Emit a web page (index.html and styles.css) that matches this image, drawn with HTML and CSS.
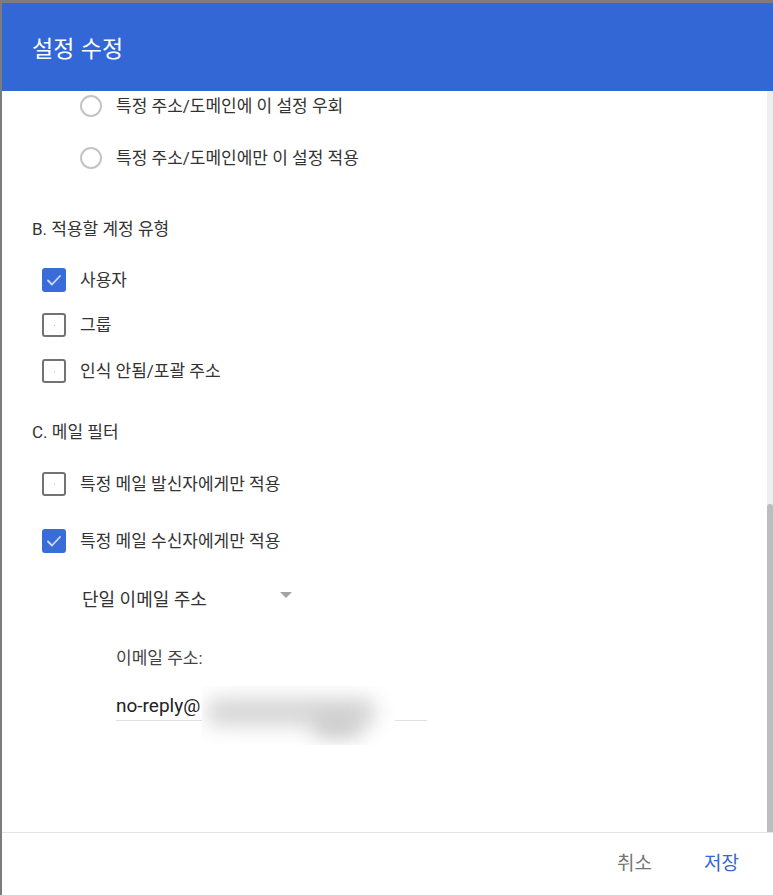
FILE: index.html
```html
<!DOCTYPE html>
<html lang="ko">
<head>
<meta charset="utf-8">
<title>설정 수정</title>
<link rel="stylesheet" href="styles.css">
</head>
<body>
<div class="dialog">
  <div class="header"><h1 class="title">설정 수정</h1></div>
  <div class="main">
    <div class="content">
      <div class="radio-row first"><span class="radio"></span><span class="label">특정 주소/도메인에 이 설정 우회</span></div>
      <div class="radio-row second"><span class="radio"></span><span class="label">특정 주소/도메인에만 이 설정 적용</span></div>

      <div class="section-title sec-b">B. 적용할 계정 유형</div>
      <div class="check-row b1"><span class="box checked"><svg viewBox="0 0 24 24" width="24" height="24"><path d="M6 12.5l4 4 8-8.5" fill="none" stroke="#cfdcf7" stroke-width="1.8" stroke-linecap="round" stroke-linejoin="round"/></svg></span><span class="label">사용자</span></div>
      <div class="check-row b2"><span class="box"><span class="dot"></span></span><span class="label">그룹</span></div>
      <div class="check-row b3"><span class="box"><span class="dot"></span></span><span class="label">인식 안됨/포괄 주소</span></div>

      <div class="section-title sec-c">C. 메일 필터</div>
      <div class="check-row c1"><span class="box"><span class="dot"></span></span><span class="label">특정 메일 발신자에게만 적용</span></div>
      <div class="check-row c2"><span class="box checked"><svg viewBox="0 0 24 24" width="24" height="24"><path d="M6 12.5l4 4 8-8.5" fill="none" stroke="#cfdcf7" stroke-width="1.8" stroke-linecap="round" stroke-linejoin="round"/></svg></span><span class="label">특정 메일 수신자에게만 적용</span></div>

      <div class="dropdown"><span class="dd-text">단일 이메일 주소</span><span class="dd-arrow"></span></div>

      <div class="field-label">이메일 주소:</div>
      <div class="input-wrap">
        <div class="input">no-reply@</div>
        <div class="redact"><div class="blob"></div><div class="blob b2"></div></div>
      </div>
    </div>
    <div class="scrollbar"><div class="thumb"></div></div>
  </div>
  <div class="footer">
    <span class="btn cancel">취소</span>
    <span class="btn save">저장</span>
  </div>
</div>
</body>
</html>
```

FILE: styles.css
```css
html, body {
  margin: 0;
  padding: 0;
}
body {
  background: #7c7c7c;
  width: 773px;
  height: 895px;
  overflow: hidden;
  font-family: Roboto, "Noto Sans CJK KR", "Noto Sans", sans-serif;
  color: #333;
}
.dialog {
  margin: 3px 0 0 2px;
  height: 892px;
  background: #fff;
  display: flex;
  flex-direction: column;
}
.header {
  height: 88px;
  flex: none;
  background: #3367d6;
  display: flex;
  align-items: center;
  padding-left: 30px;
}
.title {
  margin: 0;
  font-size: 23px;
  font-weight: 400;
  color: #fff;
  letter-spacing: 0.2px;
}
.main {
  flex: none;
  height: 741px;
  display: flex;
}
.content {
  flex: 1;
  overflow: hidden;
  display: flex;
  flex-direction: column;
  align-items: flex-start;
}
.label {
  font-size: 17px;
  color: #333;
  line-height: 22px;
}
.radio-row {
  height: 30px;
  display: flex;
  align-items: center;
  gap: 14px;
  margin-left: 78px;
}
.radio-row.second { margin-top: 22px; }
.radio {
  width: 22px;
  height: 22px;
  box-sizing: border-box;
  border: 2px solid #c4c4c4;
  border-radius: 50%;
}
.section-title {
  margin-left: 30px;
  height: 20px;
  line-height: 20px;
  font-size: 17px;
  color: #333;
}
.sec-b { margin-top: 46px; }
.sec-c { margin-top: 36px; }
.check-row {
  height: 30px;
  display: flex;
  align-items: center;
  gap: 14px;
  margin-left: 40px;
}
.b1 { margin-top: 26px; }
.b2 { margin-top: 15px; }
.b3 { margin-top: 16px; }
.c1 { margin-top: 27px; }
.c2 { margin-top: 27px; }
.box {
  width: 24px;
  height: 24px;
  box-sizing: border-box;
  border: 2px solid #737373;
  border-radius: 3px;
  display: flex;
  align-items: center;
  justify-content: center;
}
.box.checked {
  border: none;
  background: #3a6cd9;
}
.dot {
  width: 1px;
  height: 1px;
  background: #bbb;
}
.dropdown {
  margin-top: 27px;
  margin-left: 80px;
  height: 30px;
  display: flex;
  align-items: center;
}
.dd-text {
  width: 198px;
  font-size: 18px;
  color: #333;
}
.dd-arrow {
  width: 0;
  height: 0;
  border-left: 6.5px solid transparent;
  border-right: 6.5px solid transparent;
  border-top: 6.5px solid #a3a3a3;
  margin-top: -6px;
}
.field-label {
  margin-top: 35px;
  margin-left: 114px;
  height: 20px;
  line-height: 20px;
  font-size: 17px;
  color: #444;
}
.input-wrap {
  margin-top: 24px;
  margin-left: 114px;
  position: relative;
}
.input {
  width: 311px;
  height: 28px;
  line-height: 28px;
  font-size: 19px;
  color: #222;
  border-bottom: 1px solid #e0e0e0;
}
.redact {
  position: absolute;
  left: 86px;
  top: -6px;
  width: 193px;
  height: 59px;
  background: #fff;
  overflow: hidden;
}
.blob {
  position: absolute;
  left: 4px;
  top: 12px;
  width: 170px;
  height: 28px;
  background: #d6d6d6;
  border-radius: 12px;
  filter: blur(10px);
}
.blob.b2 {
  left: 110px;
  top: 14px;
  width: 50px;
  height: 22px;
  background: #c8c8c8;
}
.scrollbar {
  width: 6px;
  flex: none;
  background: #efefef;
  display: flex;
  flex-direction: column;
}
.thumb {
  margin-top: auto;
  height: 328px;
  background: #bdbdbd;
  border-radius: 3px 3px 0 0;
}
.footer {
  flex: 1;
  border-top: 1px solid #e3e3e3;
  display: flex;
  align-items: center;
  justify-content: flex-end;
  padding-right: 34px;
  gap: 52px;
}
.btn {
  font-size: 19px;
  line-height: 22px;
}
.cancel { color: #757575; }
.save { color: #3367d6; }
```
